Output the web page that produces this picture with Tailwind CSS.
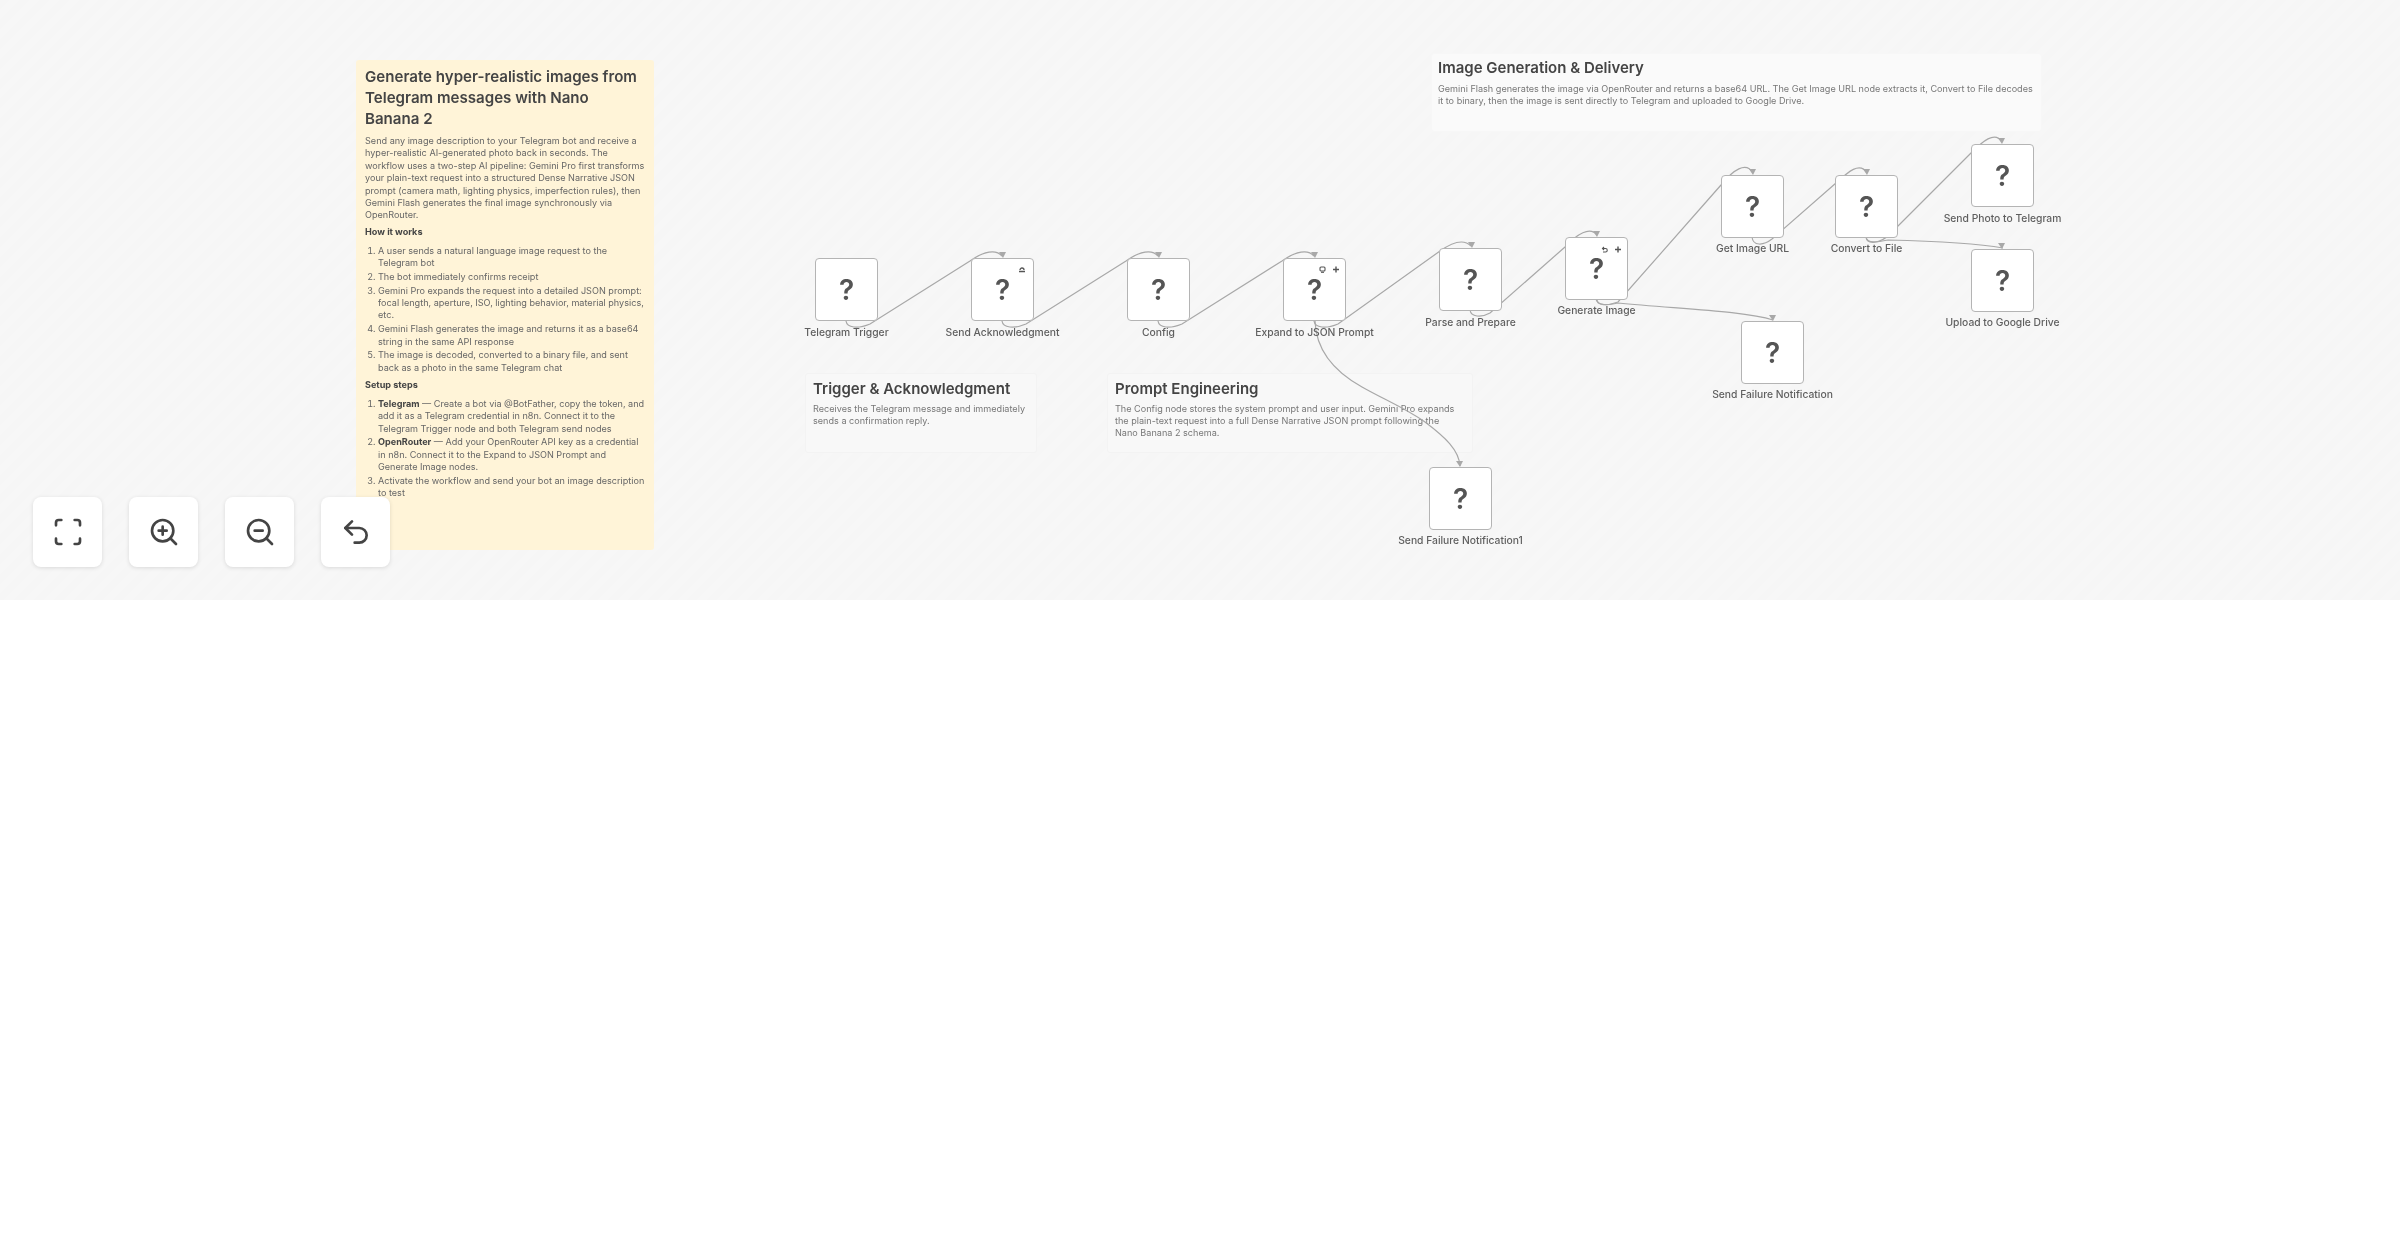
<!DOCTYPE html>
<html lang="en">

<head>
    <meta charset="UTF-8">
    <meta name="viewport" content="width=device-width, initial-scale=1.0">
    <script src="https://cdn.jsdelivr.net/npm/@tailwindcss/browser@4"></script>
    <title>Workflow preview</title>
</head>

<body class="bg-white font-['Inter',sans-serif]">
    <div class="relative w-[2400px] h-[600px] overflow-hidden blur-[0.6px] bg-[repeating-linear-gradient(135deg,#f6f6f6_0px,#f6f6f6_7px,#f7f7f7_7px,#f7f7f7_14px)]">

        <!-- sticky notes -->
        <div class="absolute left-[356px] top-[60px] w-[298px] h-[490px] rounded-[3px] bg-[#fff4d8] pl-[9px] pt-[6px] whitespace-nowrap text-[9.1px] leading-[12.4px] text-[#666]">
            <h1 class="text-[15.1px] leading-[21px] font-semibold text-[#444] mb-[6px] whitespace-normal pr-[9px]">Generate hyper-realistic images from Telegram messages with Nano Banana 2</h1>
            <p>Send any image description to your Telegram bot and receive a<br>hyper-realistic AI-generated photo back in seconds. The<br>workflow uses a two-step AI pipeline: Gemini Pro first transforms<br>your plain-text request into a structured Dense Narrative JSON<br>prompt (camera math, lighting physics, imperfection rules), then<br>Gemini Flash generates the final image synchronously via<br>OpenRouter.</p>
            <h2 class="font-bold text-[#444] mt-[4px] mb-[6.6px]">How it works</h2>
            <ol class="list-decimal pl-[13px] flex flex-col gap-[1.3px]">
                <li>A user sends a natural language image request to the<br>Telegram bot</li>
                <li>The bot immediately confirms receipt</li>
                <li>Gemini Pro expands the request into a detailed JSON prompt:<br>focal length, aperture, ISO, lighting behavior, material physics,<br>etc.</li>
                <li>Gemini Flash generates the image and returns it as a base64<br>string in the same API response</li>
                <li>The image is decoded, converted to a binary file, and sent<br>back as a photo in the same Telegram chat</li>
            </ol>
            <h2 class="font-bold text-[#444] mt-[4.6px] mb-[6.6px]">Setup steps</h2>
            <ol class="list-decimal pl-[13px] flex flex-col gap-[1.3px]">
                <li><b class="text-[#444]">Telegram</b> — Create a bot via @BotFather, copy the token, and<br>add it as a Telegram credential in n8n. Connect it to the<br>Telegram Trigger node and both Telegram send nodes</li>
                <li><b class="text-[#444]">OpenRouter</b> — Add your OpenRouter API key as a credential<br>in n8n. Connect it to the Expand to JSON Prompt and<br>Generate Image nodes.</li>
                <li>Activate the workflow and send your bot an image description<br>to test</li>
            </ol>
        </div>

        <div class="absolute left-[805px] top-[373px] w-[232px] h-[80px] rounded-[3px] border border-[#f3f3f3] bg-[#f8f8f8] pl-[7px] pt-[4px] whitespace-nowrap text-[9.1px] leading-[12px] text-[#777]">
            <h3 class="text-[15px] leading-[21px] font-semibold text-[#444] mb-[4px]">Trigger &amp; Acknowledgment</h3>
            <p>Receives the Telegram message and immediately<br>sends a confirmation reply.</p>
        </div>
        <div class="absolute left-[1107px] top-[373px] w-[366px] h-[80px] rounded-[3px] border border-[#f3f3f3] bg-[#f8f8f8] pl-[7px] pt-[4px] whitespace-nowrap text-[9.1px] leading-[12px] text-[#777]">
            <h3 class="text-[15px] leading-[21px] font-semibold text-[#444] mb-[4px]">Prompt Engineering</h3>
            <p>The Config node stores the system prompt and user input. Gemini Pro expands<br>the plain-text request into a full Dense Narrative JSON prompt following the<br>Nano Banana 2 schema.</p>
        </div>
        <div class="absolute left-[1431px] top-[53px] w-[611px] h-[79px] rounded-[3px] border border-[#f7f7f7] bg-[#fafafa] pl-[6px] pt-[3px] whitespace-nowrap text-[9.1px] leading-[12px] text-[#777]">
            <h3 class="text-[15px] leading-[21px] font-semibold text-[#444] mb-[5px]">Image Generation &amp; Delivery</h3>
            <p>Gemini Flash generates the image via OpenRouter and returns a base64 URL. The Get Image URL node extracts it, Convert to File decodes<br>it to binary, then the image is sent directly to Telegram and uploaded to Google Drive.</p>
        </div>

        <!-- connections -->
        <svg class="absolute left-0 top-0" width="2400" height="600" viewBox="0 0 2400 600" fill="none" stroke="#a8a8a8" stroke-width="1.2">
            <path d="M846 321 C847 328 858 329 870 324 L970 261 C984 251 996 249 1002 256" />
            <path d="M1002 321 C1003 328 1014 329 1026 324 L1126 261 C1140 251 1152 249 1158 256" />
            <path d="M1158 321 C1159 328 1170 329 1182 324 L1282 261 C1296 251 1308 249 1314 256" />
            <path d="M1314 321 C1315 328 1326 329 1338 324 L1440 251 C1454 241 1464 239 1471 246" />
            <path d="M1470 310 C1471 317 1481 318 1490 313 L1565 247 C1577 234 1590 226 1597 235" />
            <path d="M1596 299 C1597 306 1607 306 1618 302 L1721 185 C1733 170 1746 161 1753 173" />
            <path d="M1752 237 C1753 246 1763 246 1772 239 L1836 183 C1848 172 1860 161 1867 173" />
            <path d="M1866 237 C1867 245 1880 244 1890 234 L1971 153 C1982 142 1995 130 2002 142" />
            <path d="M1866 237 C1867 244 1878 242 1888 240 C1930 241 1975 243 2003 248" />
            <path d="M1597 300 C1598 306 1608 305 1618 303 C1680 309 1745 311 1773 320" />
            <path d="M1315 321 C1316 350 1335 372 1362 387 C1385 400 1405 408 1425 422 C1445 437 1459 450 1460 466" />
            <g fill="#a8a8a8" stroke="none">
                <path d="M999 252 L1006 252 L1003 258 Z" />
                <path d="M1155 252 L1162 252 L1159 258 Z" />
                <path d="M1311 252 L1318 252 L1315 258 Z" />
                <path d="M1468 242 L1475 242 L1472 248 Z" />
                <path d="M1593 231 L1600 231 L1597 237 Z" />
                <path d="M1749 169 L1756 169 L1753 175 Z" />
                <path d="M1863 169 L1870 169 L1867 175 Z" />
                <path d="M1998 138 L2005 138 L2002 144 Z" />
                <path d="M1998 243 L2005 243 L2002 249 Z" />
                <path d="M1769 315 L1776 315 L1773 321 Z" />
                <path d="M1456 461 L1463 461 L1460 467 Z" />
            </g>
        </svg>

        <!-- nodes -->
        <div class="absolute left-[815px] top-[258px] w-[63px] flex flex-col items-center">
            <div class="w-[63px] h-[63px] rounded-[4px] border border-[#b4b4b4] bg-white flex items-center justify-center text-[28px] font-semibold text-[#555]">?</div>
            <span class="mt-[5px] whitespace-nowrap text-[10.3px] leading-[12px] font-medium text-[#5f5f5f]">Telegram Trigger</span>
        </div>
        <div class="absolute left-[971px] top-[258px] w-[63px] flex flex-col items-center">
            <div class="relative w-[63px] h-[63px] rounded-[4px] border border-[#b4b4b4] bg-white flex items-center justify-center text-[28px] font-semibold text-[#555]">?
                <svg class="absolute right-[7px] top-[7px]" width="8" height="7" viewBox="0 0 8 7" fill="none" stroke="#555" stroke-width="1.3"><path d="M2 4 A2 2 0 1 1 6 4 M1 5.5 H7" /></svg>
            </div>
            <span class="mt-[5px] whitespace-nowrap text-[10.3px] leading-[12px] font-medium text-[#5f5f5f]">Send Acknowledgment</span>
        </div>
        <div class="absolute left-[1127px] top-[258px] w-[63px] flex flex-col items-center">
            <div class="w-[63px] h-[63px] rounded-[4px] border border-[#b4b4b4] bg-white flex items-center justify-center text-[28px] font-semibold text-[#555]">?</div>
            <span class="mt-[5px] whitespace-nowrap text-[10.3px] leading-[12px] font-medium text-[#5f5f5f]">Config</span>
        </div>
        <div class="absolute left-[1283px] top-[258px] w-[63px] flex flex-col items-center">
            <div class="relative w-[63px] h-[63px] rounded-[4px] border border-[#b4b4b4] bg-white flex items-center justify-center text-[28px] font-semibold text-[#555]">?
                <svg class="absolute right-[19px] top-[7px]" width="7" height="7" viewBox="0 0 7 7" fill="none" stroke="#555" stroke-width="1.1"><rect x="1" y="1" width="5" height="4" rx="1" /><path d="M2 6.3 H5" /></svg>
                <svg class="absolute right-[5px] top-[7px]" width="8" height="7" viewBox="0 0 8 7" fill="none" stroke="#555" stroke-width="1.4"><path d="M4 0.5 V6.5 M1 3.5 H7" /></svg>
            </div>
            <span class="mt-[5px] whitespace-nowrap text-[10.3px] leading-[12px] font-medium text-[#5f5f5f]">Expand to JSON Prompt</span>
        </div>
        <div class="absolute left-[1439px] top-[248px] w-[63px] flex flex-col items-center">
            <div class="w-[63px] h-[63px] rounded-[4px] border border-[#b4b4b4] bg-white flex items-center justify-center text-[28px] font-semibold text-[#555]">?</div>
            <span class="mt-[5px] whitespace-nowrap text-[10.3px] leading-[12px] font-medium text-[#5f5f5f]">Parse and Prepare</span>
        </div>
        <div class="absolute left-[1565px] top-[237px] w-[63px] flex flex-col items-center">
            <div class="relative w-[63px] h-[63px] rounded-[4px] border border-[#b4b4b4] bg-white flex items-center justify-center text-[28px] font-semibold text-[#555]">?
                <svg class="absolute right-[19px] top-[8px]" width="7" height="7" viewBox="0 0 7 7" fill="none" stroke="#555" stroke-width="1.1"><path d="M1.5 2.5 H4.5 A1.7 1.7 0 0 1 4.5 6 H2 M3 1 L1.5 2.5 L3 4" /></svg>
                <svg class="absolute right-[5px] top-[8px]" width="8" height="7" viewBox="0 0 8 7" fill="none" stroke="#555" stroke-width="1.4"><path d="M4 0.5 V6.5 M1 3.5 H7" /></svg>
            </div>
            <span class="mt-[4px] whitespace-nowrap text-[10.3px] leading-[12px] font-medium text-[#5f5f5f]">Generate Image</span>
        </div>
        <div class="absolute left-[1721px] top-[175px] w-[63px] flex flex-col items-center">
            <div class="w-[63px] h-[63px] rounded-[4px] border border-[#b4b4b4] bg-white flex items-center justify-center text-[28px] font-semibold text-[#555]">?</div>
            <span class="mt-[4px] whitespace-nowrap text-[10.3px] leading-[12px] font-medium text-[#5f5f5f]">Get Image URL</span>
        </div>
        <div class="absolute left-[1835px] top-[175px] w-[63px] flex flex-col items-center">
            <div class="w-[63px] h-[63px] rounded-[4px] border border-[#b4b4b4] bg-white flex items-center justify-center text-[28px] font-semibold text-[#555]">?</div>
            <span class="mt-[4px] whitespace-nowrap text-[10.3px] leading-[12px] font-medium text-[#5f5f5f]">Convert to File</span>
        </div>
        <div class="absolute left-[1971px] top-[144px] w-[63px] flex flex-col items-center">
            <div class="w-[63px] h-[63px] rounded-[4px] border border-[#b4b4b4] bg-white flex items-center justify-center text-[28px] font-semibold text-[#555]">?</div>
            <span class="mt-[5px] whitespace-nowrap text-[10.3px] leading-[12px] font-medium text-[#5f5f5f]">Send Photo to Telegram</span>
        </div>
        <div class="absolute left-[1971px] top-[249px] w-[63px] flex flex-col items-center">
            <div class="w-[63px] h-[63px] rounded-[4px] border border-[#b4b4b4] bg-white flex items-center justify-center text-[28px] font-semibold text-[#555]">?</div>
            <span class="mt-[4px] whitespace-nowrap text-[10.3px] leading-[12px] font-medium text-[#5f5f5f]">Upload to Google Drive</span>
        </div>
        <div class="absolute left-[1741px] top-[321px] w-[63px] flex flex-col items-center">
            <div class="w-[63px] h-[63px] rounded-[4px] border border-[#b4b4b4] bg-white flex items-center justify-center text-[28px] font-semibold text-[#555]">?</div>
            <span class="mt-[4px] whitespace-nowrap text-[10.3px] leading-[12px] font-medium text-[#5f5f5f]">Send Failure Notification</span>
        </div>
        <div class="absolute left-[1429px] top-[467px] w-[63px] flex flex-col items-center">
            <div class="w-[63px] h-[63px] rounded-[4px] border border-[#b4b4b4] bg-white flex items-center justify-center text-[28px] font-semibold text-[#555]">?</div>
            <span class="mt-[4px] whitespace-nowrap text-[10.3px] leading-[12px] font-medium text-[#5f5f5f]">Send Failure Notification1</span>
        </div>

        <!-- canvas controls -->
        <div class="absolute left-[33px] top-[497px] flex gap-[27px]">
            <button class="w-[69px] h-[70px] rounded-[8px] bg-white shadow-[0_1px_4px_rgba(0,0,0,0.12)] flex items-center justify-center">
                <svg width="32" height="32" viewBox="0 0 24 24" fill="none" stroke="#444" stroke-width="2" stroke-linecap="round" stroke-linejoin="round"><path d="M3 7V5a2 2 0 0 1 2-2h2M17 3h2a2 2 0 0 1 2 2v2M21 17v2a2 2 0 0 1-2 2h-2M7 21H5a2 2 0 0 1-2-2v-2" /></svg>
            </button>
            <button class="w-[69px] h-[70px] rounded-[8px] bg-white shadow-[0_1px_4px_rgba(0,0,0,0.12)] flex items-center justify-center">
                <svg width="32" height="32" viewBox="0 0 24 24" fill="none" stroke="#444" stroke-width="2" stroke-linecap="round" stroke-linejoin="round"><circle cx="11" cy="11" r="8" /><path d="M21 21l-4.3-4.3M11 8v6M8 11h6" /></svg>
            </button>
            <button class="w-[69px] h-[70px] rounded-[8px] bg-white shadow-[0_1px_4px_rgba(0,0,0,0.12)] flex items-center justify-center">
                <svg width="32" height="32" viewBox="0 0 24 24" fill="none" stroke="#444" stroke-width="2" stroke-linecap="round" stroke-linejoin="round"><circle cx="11" cy="11" r="8" /><path d="M21 21l-4.3-4.3M8 11h6" /></svg>
            </button>
            <button class="w-[69px] h-[70px] rounded-[8px] bg-white shadow-[0_1px_4px_rgba(0,0,0,0.12)] flex items-center justify-center">
                <svg width="32" height="32" viewBox="0 0 24 24" fill="none" stroke="#444" stroke-width="2" stroke-linecap="round" stroke-linejoin="round"><path d="M9 14L4 9l5-5" /><path d="M4 9h10.5a5.5 5.5 0 0 1 0 11H11" /></svg>
            </button>
        </div>
    </div>
</body>

</html>
